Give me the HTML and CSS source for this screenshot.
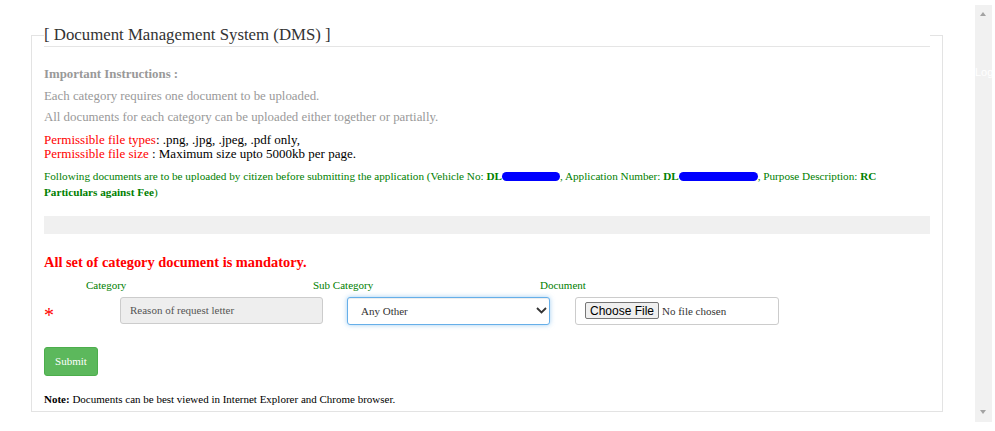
FILE: index.html
```html
<!DOCTYPE html>
<html lang="en">
<head>
<meta charset="utf-8">
<title>Document Management System (DMS)</title>
<link rel="stylesheet" href="styles.css">
</head>
<body>
<div class="page">
  <fieldset class="dms">
    <legend class="dms-legend">[ Document Management System (DMS) ]</legend>
    <div class="instructions">
      <div class="instr-title">Important Instructions :</div>
      <div>Each category requires one document to be uploaded.</div>
      <div>All documents for each category can be uploaded either together or partially.</div>
    </div>
    <div class="permissible">
      <div><span class="red">Permissible file types</span>: .png, .jpg, .jpeg, .pdf only,</div>
      <div><span class="red">Permissible file size</span> : Maximum size upto 5000kb per page.</div>
    </div>
    <p class="following">Following documents are to be uploaded by citizen before submitting the application (Vehicle No: <b>DL</b><span class="redact redact-1"></span>, Application Number: <b>DL</b><span class="redact redact-2"></span>, Purpose Description: <b>RC Particulars against Fee</b>)</p>
    <div class="grey-bar"></div>
    <h4 class="mandatory">All set of category document is mandatory.</h4>
    <div class="upload-grid">
      <span class="empty"></span>
      <span class="col-label">Category</span>
      <span class="col-label">Sub Category</span>
      <span class="col-label">Document</span>
      <span class="star">*</span>
      <div class="cell"><input class="field readonly" type="text" readonly value="Reason of request letter"></div>
      <div class="cell select-wrap">
        <select class="field select"><option>Any Other</option></select>
        <svg class="chev" width="11" height="7" viewBox="0 0 11 7"><path d="M1 1 L5.5 5.5 L10 1" fill="none" stroke="#333" stroke-width="1.8"/></svg>
      </div>
      <div class="cell"><div class="field file"><span class="choose">Choose File</span><span class="nofile">No file chosen</span></div></div>
    </div>
    <button class="submit" type="button">Submit</button>
    <p class="note"><b>Note:</b> Documents can be best viewed in Internet Explorer and Chrome browser.</p>
  </fieldset>
</div>
<div class="scrollbar">
  <span class="arrow arrow-up"></span>
  <span class="arrow arrow-down"></span>
</div>
<span class="nav-link">Log</span>
</body>
</html>
```
FILE: styles.css
```css
* { box-sizing: border-box; }
html, body { margin: 0; padding: 0; background: #fff; overflow: hidden; }
body { font-family: "Liberation Serif", "Times New Roman", serif; color: #000; }

.page { padding: 23px 0 0 31px; }

.dms {
  width: 912px;
  margin: 0;
  padding: 0 12px 5px;
  border: 1px solid #e3e3e3;
  min-width: 0;
}
.dms-legend {
  display: block;
  width: 100%;
  padding: 0;
  margin: 0;
  font-size: 16.8px;
  line-height: 23px;
  color: #333;
  border-bottom: 1px solid #e5e5e5;
}

.instructions { margin-top: 17px; font-size: 12.85px; line-height: 21.5px; color: #999; }
.instr-title { font-weight: bold; }

.permissible { margin-top: 4px; font-size: 13px; line-height: 14px; color: #000; }
.red { color: #f00; }

.following { margin: 7px 0 0; font-size: 11.2px; line-height: 16px; color: #008000; }
.redact { display: inline-block; height: 9px; background: #0000ff; border-radius: 5px; vertical-align: -1px; }
.redact-1 { width: 58px; }
.redact-2 { width: 79px; }

.grey-bar { margin-top: 16px; height: 18px; background: #f0f0f0; }

.mandatory { margin: 18px 0 0; font-size: 14.4px; line-height: 20px; font-weight: bold; color: #f00; }

.upload-grid {
  margin-top: 6px;
  display: grid;
  grid-template-columns: 42px 227px 227px 227px;
  row-gap: 5px;
}
.col-label { font-size: 11px; line-height: 14px; color: #008000; }
.star { color: #f00; font-size: 20px; height: 28px; line-height: 28px; padding-top: 4px; }

.field {
  display: block;
  margin: 0 0 0 34px;
  width: 203px;
  height: 27px;
  border: 1px solid #ccc;
  border-radius: 3px;
  font-family: inherit;
  font-size: 11px;
  background: #fff;
}
.readonly { background: #eee; color: #555; padding: 0 9px; outline: none; }

.select-wrap { position: relative; }
.select {
  -webkit-appearance: none;
  appearance: none;
  height: 28px;
  padding: 0 0 0 13px;
  color: #333;
  border-color: #66afe9;
  box-shadow: inset 0 1px 1px rgba(0,0,0,.075), 0 0 5px rgba(102,175,233,.6);
  outline: none;
}
.chev { position: absolute; left: 223px; top: 10px; }

.file { display: flex; align-items: center; margin-left: 35px; width: 204px; height: 28px; padding-left: 9px; }
.choose {
  display: inline-flex;
  align-items: center;
  justify-content: center;
  width: 74px;
  height: 17px;
  font-family: "Liberation Sans", Arial, sans-serif;
  font-size: 12px;
  color: #000;
  background: #efefef;
  border: 1px solid #767676;
  border-radius: 2px;
}
.nofile { margin-left: 3px; font-size: 11px; color: #333; }

.submit {
  display: block;
  margin-top: 22px;
  width: 54px;
  height: 29px;
  padding: 0;
  background: #5cb85c;
  border: 1px solid #4cae4c;
  border-radius: 3px;
  color: #fff;
  font-family: inherit;
  font-size: 11px;
}

.note { margin: 16px 0 0; font-size: 11px; line-height: 14px; color: #000; }

.scrollbar {
  position: absolute;
  left: 975px;
  top: 5px;
  width: 17px;
  height: 417px;
  background: #f1f1f1;
}
.arrow { position: absolute; left: 5px; width: 0; height: 0; border-left: 3.5px solid transparent; border-right: 3.5px solid transparent; }
.arrow-up { top: 7px; border-bottom: 4px solid #a3a3a3; }
.arrow-down { bottom: 8px; border-top: 4px solid #a3a3a3; }

.nav-link {
  position: absolute;
  left: 975px;
  top: 66px;
  color: #fff;
  font-family: "Liberation Sans", Arial, sans-serif;
  font-size: 11px;
  white-space: nowrap;
}
```
